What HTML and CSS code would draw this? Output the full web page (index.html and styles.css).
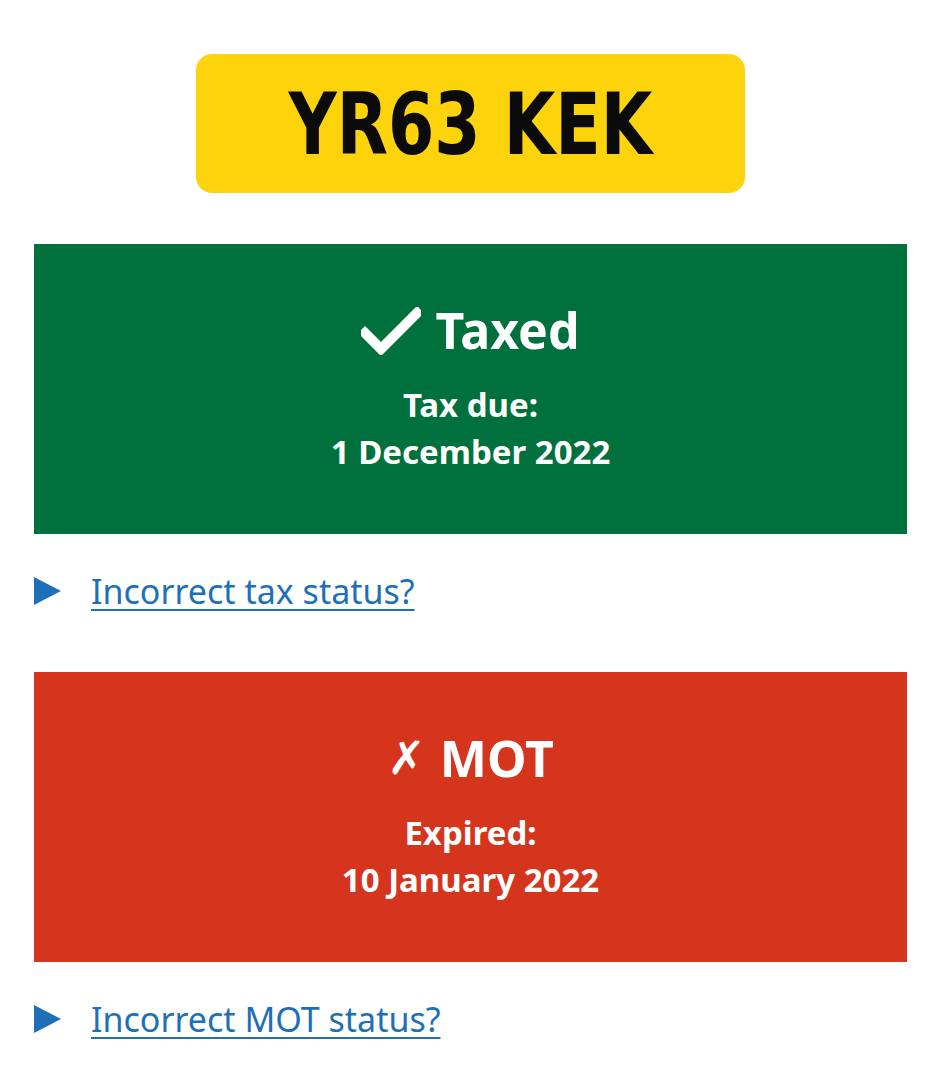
FILE: index.html
```html
<!DOCTYPE html>
<html lang="en">
<head>
    <meta charset="UTF-8">
    <meta name="viewport" content="width=device-width, initial-scale=1.0">
    <title>Vehicle details</title>
    <link rel="stylesheet" href="styles.css">
</head>
<body>

<div class="container">
    <div class="plate">
        <span class="plate-text">YR63 KEK</span>
    </div>

    <div class="status taxed">
        <h2 class="status-title">
            <svg class="tick" viewBox="0 0 60 48" width="60" height="48" aria-hidden="true">
                <path d="M4 26 L20 42 L56 6" fill="none" stroke="white" stroke-width="10" stroke-linecap="square"/>
            </svg>
            Taxed
        </h2>
        <p class="status-text">Tax due:<br>1 December 2022</p>
    </div>

    <div class="details">
        <span class="arrow"></span>
        <a href="#">Incorrect tax status?</a>
    </div>

    <div class="status expired">
        <h2 class="status-title"><span class="cross">✗</span> MOT</h2>
        <p class="status-text">Expired:<br>10 January 2022</p>
    </div>

    <div class="details">
        <span class="arrow"></span>
        <a href="#">Incorrect MOT status?</a>
    </div>
</div>

</body>
</html>
```

FILE: styles.css
```css
body {
    margin: 0;
    font-family: "Noto Sans", Arial, sans-serif;
    background: white;
    color: #0b0c0c;
}
.container {
    padding: 54px 34px 0;
}
.plate {
    width: 549px;
    height: 139px;
    margin: 0 auto 51px;
    background: #fdd30b;
    border-radius: 16px;
    display: flex;
    align-items: center;
    justify-content: center;
}
.plate-text {
    font-family: "DejaVu Sans Condensed", "DejaVu Sans", sans-serif;
    font-weight: bold;
    font-size: 86px;
    color: #0b0b0b;
    transform: scaleX(0.86);
    white-space: nowrap;
}
.status {
    height: 290px;
    color: white;
    text-align: center;
    display: flex;
    flex-direction: column;
    align-items: center;
    justify-content: center;
}
.taxed {
    background: #00703c;
}
.expired {
    background: #d4351c;
}
.status-title {
    margin: 0 0 23px;
    font-size: 50px;
    font-weight: bold;
    line-height: 1.1;
    display: flex;
    align-items: center;
    gap: 14px;
}
.tick {
    width: 60px;
    height: 48px;
}
.cross {
    font-size: 46px;
    font-family: "DejaVu Sans", sans-serif;
}
.status-text {
    margin: 0;
    font-size: 33px;
    font-weight: bold;
    line-height: 47px;
}
.details {
    margin: 40px 0 64px;
    height: 34px;
    display: flex;
    align-items: center;
    gap: 30px;
}
.arrow {
    width: 0;
    height: 0;
    border-top: 14px solid transparent;
    border-bottom: 14px solid transparent;
    border-left: 27px solid #1d70b8;
}
.details a {
    color: #1d70b8;
    font-size: 34px;
    line-height: 34px;
    text-underline-offset: 5px;
    text-decoration-thickness: 2px;
}
```
